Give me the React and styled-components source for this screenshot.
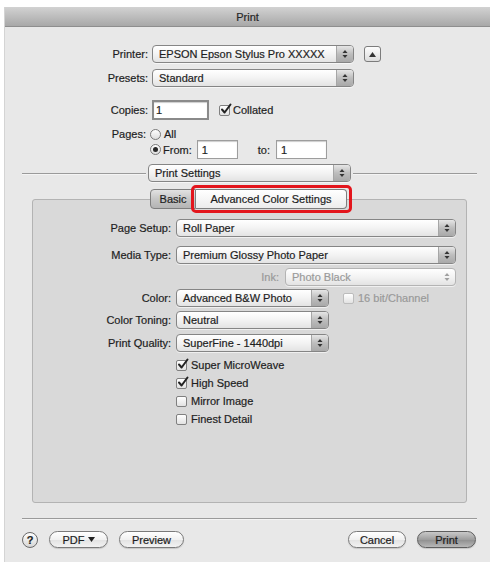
import React from "react";
import styled, { createGlobalStyle, css } from "styled-components";

const GlobalStyle = createGlobalStyle`
  html, body {
    margin: 0;
    background: #ffffff;
  }
  body {
    font-family: "Liberation Sans", Arial, sans-serif;
    font-size: 11px;
    color: #1e1e1e;
    -webkit-text-stroke: 0.2px #1e1e1e;
  }
`;

const Window = styled.div`
  margin: 7px 0 0 5px;
  width: 485px;
  height: 555px;
  background: #e8e8e8;
  display: flex;
  flex-direction: column;
  box-shadow: -1px 0 0 #d4d4d4;
`;

const TitleBar = styled.div`
  height: 19px;
  border-bottom: 1px solid #8e8e8e;
  background: linear-gradient(#d2d2d2, #a8a8a8);
  display: flex;
  align-items: center;
  justify-content: center;
  color: #2a2a2a;
  font-size: 11px;
`;

const Row = styled.div`
  display: flex;
  align-items: center;
  height: ${(p) => p.h || 18}px;
  margin-top: ${(p) => p.mt || 0}px;
`;

const Label = styled.span`
  width: ${(p) => p.w}px;
  margin-right: ${(p) => (p.gap != null ? p.gap : 4)}px;
  text-align: right;
  flex-shrink: 0;
  white-space: nowrap;
`;

const PopUpBox = styled.div`
  width: ${(p) => p.w}px;
  height: 18px;
  box-sizing: border-box;
  border: 1px solid ${(p) => (p.disabled ? "#b4b4b4" : "#858585")};
  border-radius: 4px;
  background: linear-gradient(#ffffff, #f3f3f3 50%, #e3e3e3);
  display: flex;
  align-items: stretch;
  overflow: hidden;
  box-shadow: 0 1px 0 rgba(255, 255, 255, 0.6);
  color: ${(p) => (p.disabled ? "#9a9a9a" : "inherit")};
  -webkit-text-stroke: ${(p) => (p.disabled ? "0.2px #9a9a9a" : "0.2px #1e1e1e")};
`;

const PopUpText = styled.span`
  flex: 1;
  padding-left: 6px;
  display: flex;
  align-items: center;
  white-space: nowrap;
`;

const Stepper = styled.span`
  width: 16px;
  display: flex;
  align-items: center;
  justify-content: center;
  ${(p) =>
    !p.disabled &&
    css`
      border-left: 1px solid #a6a6a6;
      background: linear-gradient(#e6e6e6, #bdbdbd 50%, #a9a9a9);
    `}
`;

const Arrows = ({ color }) => (
  <svg width="6" height="10" viewBox="0 0 6 10">
    <path d="M3 1 L5.5 4 L0.5 4 Z" fill={color} />
    <path d="M3 9 L5.5 6 L0.5 6 Z" fill={color} />
  </svg>
);

const PopUp = ({ w, children, disabled }) => (
  <PopUpBox w={w} disabled={disabled}>
    <PopUpText>{children}</PopUpText>
    <Stepper disabled={disabled}>
      <Arrows color={disabled ? "#a0a0a0" : "#333"} />
    </Stepper>
  </PopUpBox>
);

const SquareButton = styled.div`
  width: 17px;
  height: 16px;
  box-sizing: border-box;
  margin-left: 10px;
  border: 1px solid #7c7c7c;
  border-radius: 3px;
  background: linear-gradient(#fdfdfd, #dcdcdc);
  display: flex;
  align-items: center;
  justify-content: center;
`;

const TextField = styled.div`
  width: ${(p) => p.w}px;
  height: ${(p) => p.h}px;
  box-sizing: border-box;
  margin-left: ${(p) => p.ml || 0}px;
  background: #ffffff;
  border: ${(p) => (p.focus ? "2px solid #8a8a8a" : "1px solid #9d9d9d")};
  box-shadow: inset 0 1px 1px rgba(0, 0, 0, 0.2);
  padding-left: ${(p) => (p.focus ? 2 : 4)}px;
  display: flex;
  align-items: center;
`;

const CheckBox = styled.span`
  width: 11px;
  height: 11px;
  box-sizing: border-box;
  flex-shrink: 0;
  margin-left: ${(p) => p.ml || 0}px;
  margin-right: ${(p) => (p.mr != null ? p.mr : 4)}px;
  border: 1px solid ${(p) => (p.disabled ? "#bcbcbc" : "#808080")};
  border-radius: 2px;
  background: linear-gradient(#ffffff, #e2e2e2);
  position: relative;
  display: inline-flex;
`;

const Check = () => (
  <svg
    width="12"
    height="12"
    viewBox="0 0 12 12"
    style={{ position: "absolute", left: 0, top: -3 }}
  >
    <path
      d="M2 6.5 L4.6 9.5 L10.5 1.5"
      fill="none"
      stroke="#222"
      strokeWidth="2"
      strokeLinecap="round"
      strokeLinejoin="round"
    />
  </svg>
);

const Radio = styled.span`
  width: 11px;
  height: 11px;
  box-sizing: border-box;
  flex-shrink: 0;
  margin-right: ${(p) => p.mr}px;
  border: 1px solid #7a7a7a;
  border-radius: 50%;
  background: linear-gradient(#ffffff, #dedede);
  display: inline-flex;
  align-items: center;
  justify-content: center;
  &::after {
    content: "";
    width: 5px;
    height: 5px;
    border-radius: 50%;
    background: ${(p) => (p.on ? "#2a2a2a" : "transparent")};
  }
`;

const Muted = styled.span`
  color: #9a9a9a;
  -webkit-text-stroke: 0.2px #9a9a9a;
  margin-left: ${(p) => p.ml || 0}px;
  margin-right: ${(p) => p.mr || 0}px;
`;

const Plain = styled.span`
  margin-left: ${(p) => p.ml || 0}px;
  margin-right: ${(p) => p.mr || 0}px;
`;

const Divider = styled.div`
  display: flex;
  align-items: center;
  height: 18px;
  margin: ${(p) => p.mt}px 13px 0 17px;
`;

const Line = styled.div`
  flex: 1;
  height: 1px;
  background: #9a9a9a;
  box-shadow: 0 1px 0 #f4f4f4;
`;

const Rule = styled.div`
  height: 1px;
  margin: 15px 13px 0 17px;
  background: #9a9a9a;
  box-shadow: 0 1px 0 #f4f4f4;
`;

const DividerPopUp = styled.div`
  margin: 0 2px;
`;

const Group = styled.div`
  margin: 7px 23px 0 27px;
  display: flex;
  flex-direction: column;
`;

const Tabs = styled.div`
  display: flex;
  padding-left: 118px;
  height: 20px;
  position: relative;
  z-index: 1;
`;

const Tab = styled.div`
  width: ${(p) => p.w}px;
  height: 20px;
  box-sizing: border-box;
  display: flex;
  align-items: center;
  justify-content: center;
  border: 1px solid #7e7e7e;
  position: relative;
  ${(p) =>
    p.first
      ? css`
          border-radius: 4px 0 0 4px;
          background: linear-gradient(#e2e2e2, #c6c6c6 50%, #b4b4b4);
        `
      : css`
          border-left: none;
          border-radius: 0 4px 4px 0;
          background: linear-gradient(#ffffff, #f6f6f6 50%, #ececec);
        `}
  ${(p) =>
    p.marked &&
    css`
      &::after {
        content: "";
        position: absolute;
        left: -5px;
        right: -6px;
        top: -5px;
        bottom: -5px;
        border: 3px solid #e3151c;
        border-radius: 5px;
      }
    `}
`;

const Box = styled.div`
  margin-top: -10px;
  height: 304px;
  box-sizing: border-box;
  background: #d9d9d9;
  border: 1px solid #b3b3b3;
  border-radius: 3px;
  padding-top: 19px;
  display: flex;
  flex-direction: column;
`;

const InkArea = styled.div`
  width: 280px;
  display: flex;
  align-items: center;
  justify-content: flex-end;
`;

const Options = styled.div`
  display: flex;
  flex-direction: column;
  margin: 4px 0 0 143px;
`;

const Footer = styled.div`
  display: flex;
  align-items: center;
  margin: 12px 14px 0 17px;
  gap: 11px;
`;

const HelpButton = styled.div`
  width: 16px;
  height: 16px;
  box-sizing: border-box;
  border: 1px solid #6a6a6a;
  border-radius: 50%;
  background: linear-gradient(#ffffff, #d6d6d6);
  display: flex;
  align-items: center;
  justify-content: center;
  font-weight: bold;
  font-size: 11px;
`;

const PushButton = styled.div`
  width: ${(p) => p.w}px;
  height: 17px;
  box-sizing: border-box;
  border: 1px solid ${(p) => (p.primary ? "#5e5e5e" : "#7a7a7a")};
  border-radius: 9px;
  display: flex;
  align-items: center;
  justify-content: center;
  gap: 3px;
  background: ${(p) =>
    p.primary
      ? "linear-gradient(#c9c9c9, #9e9e9e 50%, #8e8e8e 51%, #b8b8b8)"
      : "linear-gradient(#ffffff, #f1f1f1 50%, #e2e2e2 51%, #f2f2f2)"};
  box-shadow: 0 1px 1px rgba(0, 0, 0, 0.15);
  margin-left: ${(p) => (p.push ? "auto" : "0")};
`;

export default function App() {
  return (
    <>
      <GlobalStyle />
      <Window>
        <TitleBar>Print</TitleBar>

        <Row mt={18}>
          <Label w={143}>Printer:</Label>
          <PopUp w={202}>EPSON Epson Stylus Pro XXXXX</PopUp>
          <SquareButton>
            <svg width="7" height="5" viewBox="0 0 7 5">
              <path d="M3.5 0 L7 5 L0 5 Z" fill="#333" />
            </svg>
          </SquareButton>
        </Row>
        <Row mt={6}>
          <Label w={143}>Presets:</Label>
          <PopUp w={202}>Standard</PopUp>
        </Row>
        <Row mt={13} h={20}>
          <Label w={143}>Copies:</Label>
          <TextField w={57} h={20} focus>
            1
          </TextField>
          <CheckBox ml={10} mr={3}>
            <Check />
          </CheckBox>
          <Plain>Collated</Plain>
        </Row>
        <Row mt={8} h={12}>
          <Label w={141}>Pages:</Label>
          <Radio mr={3} />
          <Plain>All</Plain>
        </Row>
        <Row h={19}>
          <Label w={141} />
          <Radio on mr={2} />
          <Plain>From:</Plain>
          <TextField w={41} h={19} ml={5}>
            1
          </TextField>
          <Plain ml={20}>to:</Plain>
          <TextField w={51} h={19} ml={6}>
            1
          </TextField>
        </Row>

        <Divider mt={5}>
          <Line />
          <DividerPopUp>
            <PopUp w={203}>Print Settings</PopUp>
          </DividerPopUp>
          <Line />
        </Divider>

        <Group>
          <Tabs>
            <Tab first w={46}>
              Basic
            </Tab>
            <Tab w={151} marked>
              Advanced Color Settings
            </Tab>
          </Tabs>
          <Box>
            <Row>
              <Label w={138} gap={5}>
                Page Setup:
              </Label>
              <PopUp w={280}>Roll Paper</PopUp>
            </Row>
            <Row mt={9}>
              <Label w={138} gap={5}>
                Media Type:
              </Label>
              <PopUp w={280}>Premium Glossy Photo Paper</PopUp>
            </Row>
            <Row mt={4}>
              <Label w={138} gap={5} />
              <InkArea>
                <Muted mr={6}>Ink:</Muted>
                <PopUp w={171} disabled>
                  Photo Black
                </PopUp>
              </InkArea>
            </Row>
            <Row mt={3}>
              <Label w={138} gap={5}>
                Color:
              </Label>
              <PopUp w={153}>Advanced B&amp;W Photo</PopUp>
              <CheckBox ml={14} disabled />
              <Muted>16 bit/Channel</Muted>
            </Row>
            <Row mt={4}>
              <Label w={138} gap={5}>
                Color Toning:
              </Label>
              <PopUp w={153}>Neutral</PopUp>
            </Row>
            <Row mt={5}>
              <Label w={138} gap={5}>
                Print Quality:
              </Label>
              <PopUp w={153}>SuperFine - 1440dpi</PopUp>
            </Row>
            <Options>
              <Row>
                <CheckBox>
                  <Check />
                </CheckBox>
                <Plain>Super MicroWeave</Plain>
              </Row>
              <Row>
                <CheckBox>
                  <Check />
                </CheckBox>
                <Plain>High Speed</Plain>
              </Row>
              <Row>
                <CheckBox />
                <Plain>Mirror Image</Plain>
              </Row>
              <Row>
                <CheckBox />
                <Plain>Finest Detail</Plain>
              </Row>
            </Options>
          </Box>
        </Group>

        <Rule />

        <Footer>
          <HelpButton>?</HelpButton>
          <PushButton w={59}>
            PDF
            <svg width="7" height="5" viewBox="0 0 7 5">
              <path d="M0 0 L7 0 L3.5 5 Z" fill="#222" />
            </svg>
          </PushButton>
          <PushButton w={65}>Preview</PushButton>
          <PushButton w={58} push>
            Cancel
          </PushButton>
          <PushButton w={59} primary>
            Print
          </PushButton>
        </Footer>
      </Window>
    </>
  );
}
